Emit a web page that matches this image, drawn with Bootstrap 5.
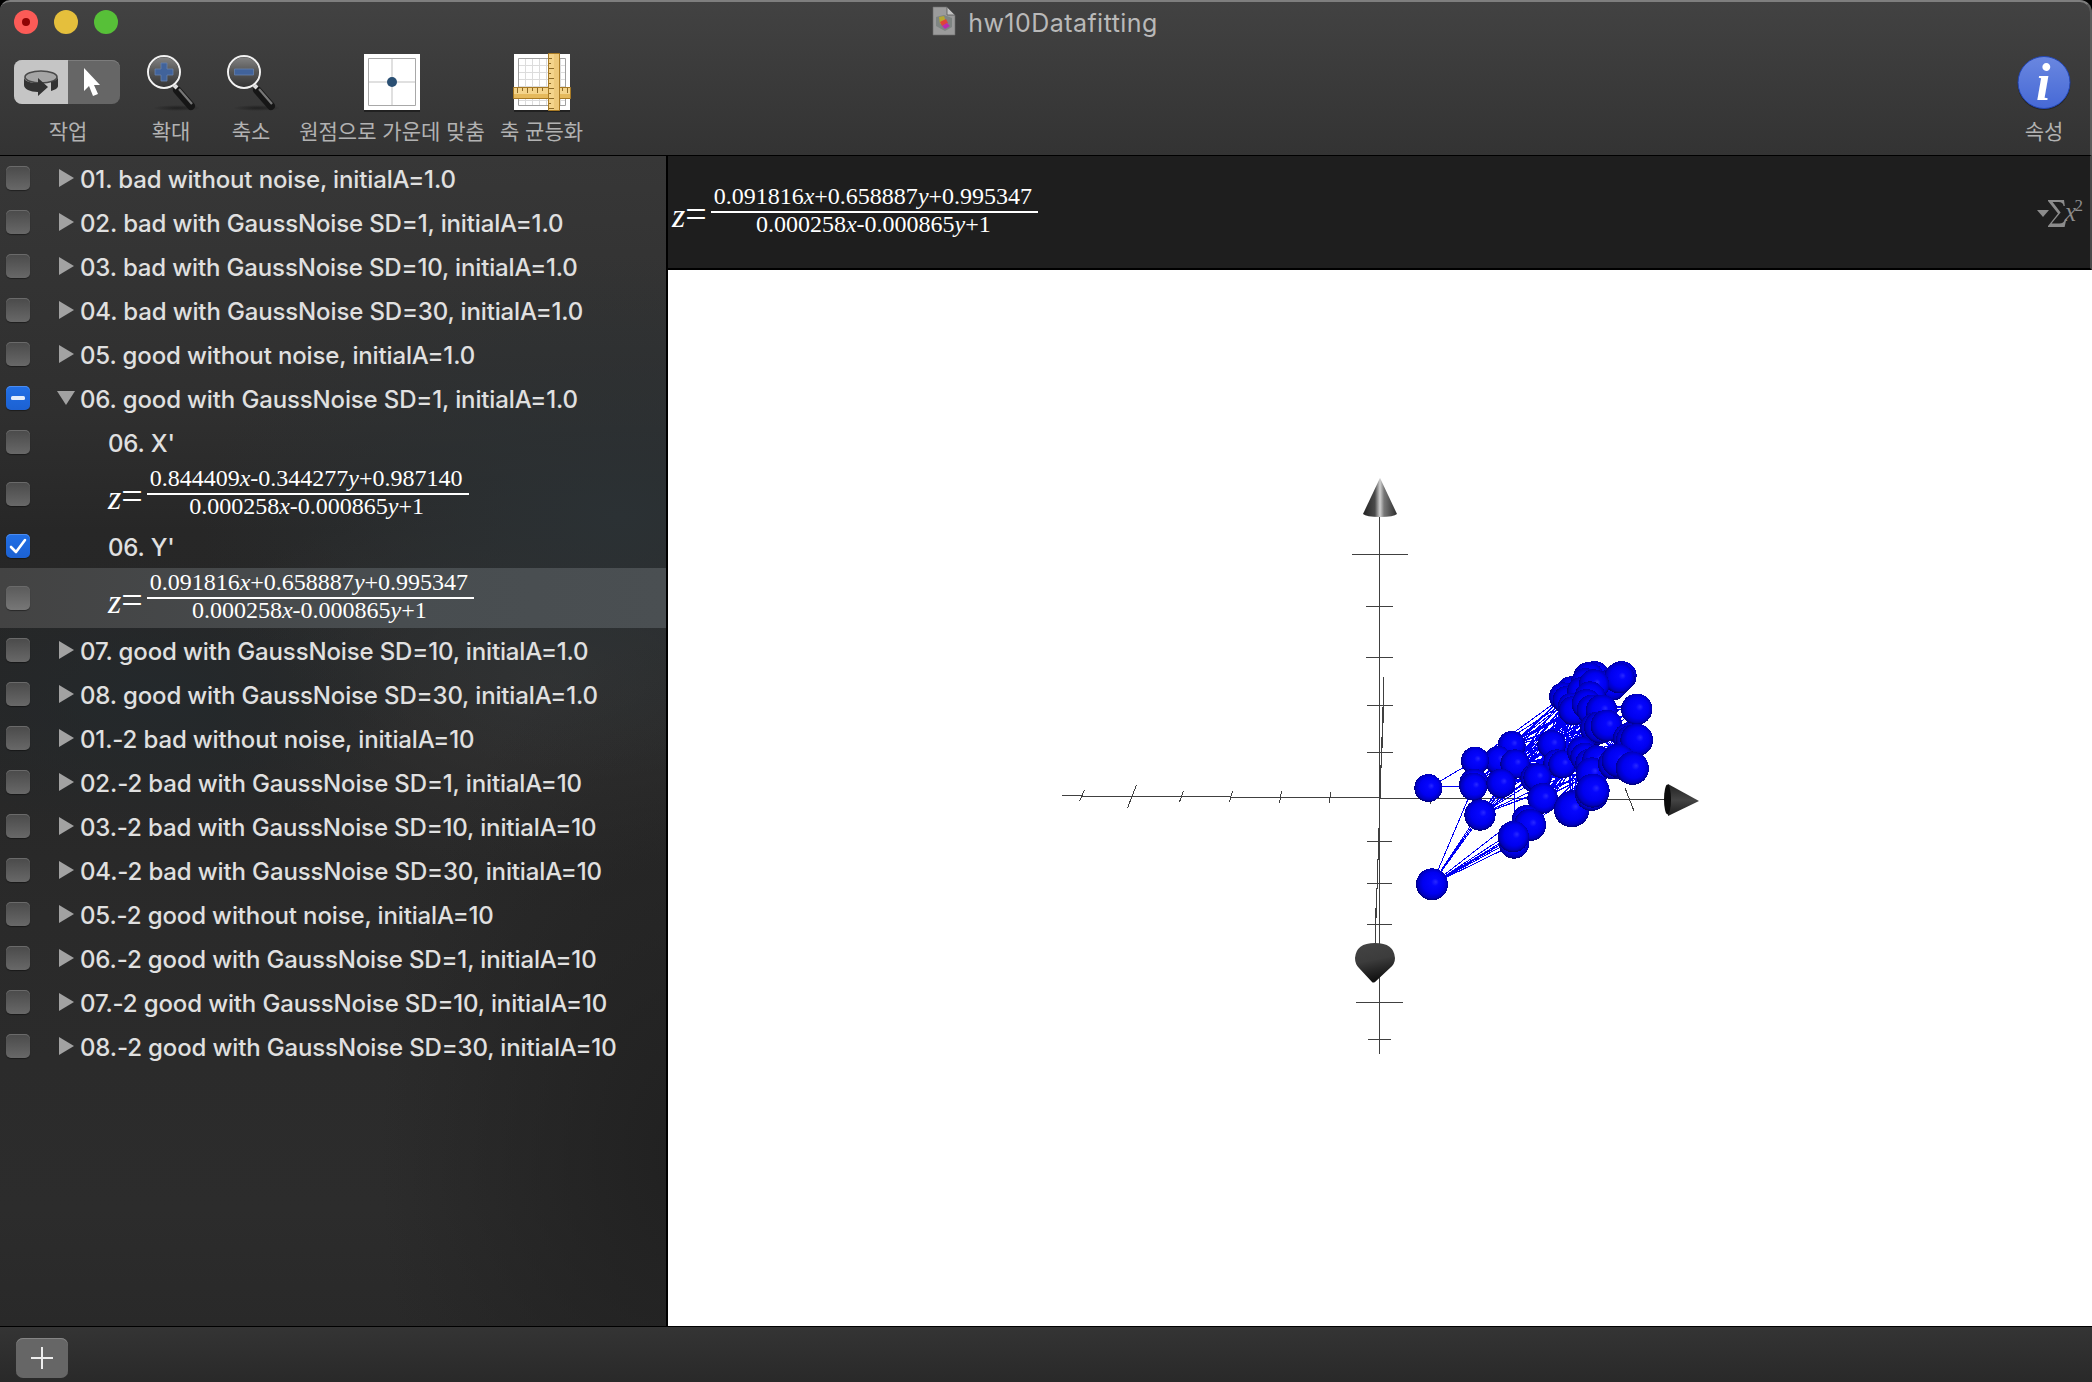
<!DOCTYPE html>
<html lang="ko" data-bs-theme="dark">
<head>
<meta charset="utf-8">
<title>hw10Datafitting</title>
<link href="https://cdn.jsdelivr.net/npm/bootstrap@5.3.0/dist/css/bootstrap.min.css" rel="stylesheet">
<style>
body{background:#000;font-family:Inter,"Noto Sans CJK KR",sans-serif;overflow:hidden}
.app-win{width:2092px;height:1382px}
.top-bar{height:156px;border-top:2px solid #7e7e7e;border-right:2px solid #5c5c5c;border-bottom:1px solid #000;border-radius:10px 12px 0 0;background:linear-gradient(#424242,#333)}
.title-row{height:42px;color:#b9b9b9;font-size:25px;letter-spacing:.45px;line-height:42px}
.dots{left:14px;top:8px;gap:16px}
.dot{width:24px;height:24px;border-radius:50%}
.tool-row{height:111px;padding:7px 6px 0 14px}
.tool{width:80px;height:103px;color:#b2b2b2;font:21px/30px "Noto Sans CJK KR",sans-serif}
.tool .pic{height:64px}
.seg{width:106px;height:44px;margin-top:9px;margin-right:2px;border-radius:8px;overflow:hidden;background:#666;box-shadow:inset 0 1px #7c7c7c}
.seg>span:first-child{width:54px;background:#c5c5c5}
.side{width:668px;border-right:2px solid #000;background:radial-gradient(420px 260px at 620px 360px,#2b3134 0,#2b313400 100%),radial-gradient(260px 140px at 160px 540px,#24292c 0,#24292c00 100%),radial-gradient(300px 520px at 680px 1000px,#212121 0,#21212100 100%),radial-gradient(360px 200px at 560px 520px,#333 0,#3330 100%),linear-gradient(#373737 0,#2f2f2f 22%,#272727 32%,#262626 45%,#2a2a2a 65%,#2c2c2c 90%,#292929 100%)}
.item{height:44px;padding-left:6px;color:#e0e0e0;font-size:24px;font-weight:450;letter-spacing:-.14px;line-height:44px;white-space:nowrap}
.item.eqn{height:60px;font-weight:400}
.item.sel{background:linear-gradient(90deg,#434343,#484d50 60%,#4a4f52)}
.chk{width:24px;height:24px;border-radius:5px;flex:none;background:linear-gradient(#4a4a4a,#686868);box-shadow:0 1px 1px #0006,inset 0 1px #6a6a6a}
.chk.on{background:linear-gradient(#2270e6,#1c61d2);box-shadow:0 1px 1px #0006,inset 0 1px #4b8cf0}
.sel .chk{background:linear-gradient(#5a5a5a,#777)}
.chk svg,.tri{display:block}
.tri{flex:none;margin:0 4px 0 28px}
.lbl{padding-top:4px}
.kid{margin-left:78px}
.eq{font-family:"Liberation Serif",serif;color:#fff;letter-spacing:0}
.eq .lhs{font-size:34px;line-height:34px;padding-top:7px;margin-right:4px}
.eq b{font-size:38px;font-weight:400;line-height:1px}
.fr{font-size:24px;text-align:center;margin-top:-2px}
.fr .nu{line-height:26px;padding:0 6px 2px 3px;border-bottom:2px solid #fff}
.fr .de{line-height:22px;padding:0 2px 6px 0}
.fr .de{margin-bottom:-2px}
.fbar{height:114px;background:#1e1e1e;border-bottom:2px solid #000;border-right:2px solid #4a4a4a;padding:0 7px 0 4px}
.foot{height:56px;border-top:1px solid #000;background:linear-gradient(#343434,#292929);padding:11px 0 0 16px}
.plus{width:52px;height:40px;padding:0;border:0;border-radius:7px;background:#666;box-shadow:inset 0 1px #858585}
</style>
</head>
<body>
<div class="app-win d-flex flex-column">
<header class="top-bar flex-shrink-0 position-relative">
 <div class="dots position-absolute d-flex">
  <span class="dot d-flex align-items-center justify-content-center" style="background:#fc5b57"><svg width="8" height="8"><circle cx="4" cy="4" r="4" fill="#8f0404"/></svg></span>
  <span class="dot" style="background:#e5bf3c"></span><span class="dot" style="background:#57c038"></span>
 </div>
 <div class="title-row d-flex justify-content-center">
  <svg width="24" height="30" viewBox="0 0 24 30" class="me-2" style="margin-top:4px"><path d="M1 1h14l8 8v20H1z" fill="#9b9b9b" stroke="#6b6b6b" stroke-width=".6"/><path d="M15 1v8h8z" fill="#c2c2c2" stroke="#555" stroke-width=".8"/><path d="M4 11l8-2 8 3v9l-7 4-9-5z" fill="#7e8482"/><path d="M7 11l5-1 2 6-6 2z" fill="#b5a72f"/><path d="M8 16l6-3 2 4-6 3z" fill="#e0423a"/><path d="M10 20l5-3 3 3-5 3z" fill="#b92cae"/></svg>
  <span class="ms-1">hw10Datafitting</span>
 </div>
 <div class="tool-row d-flex">
  <div class="tool d-flex flex-column align-items-center" style="width:108px"><div class="pic">
   <div class="seg d-flex"><span><svg width="54" height="44" viewBox="0 0 54 44"><ellipse cx="27" cy="17" rx="16" ry="6" fill="#a5a5a5" stroke="#4a4a4a" stroke-width="1.6"/><path d="M10 17v8c0 4 6 7 14 7v4l10-9-10-9v5c-8 0-14-2-14-6zM44 17v9c0 2-3 4-7 5v-9c4-1 7-3 7-5z" fill="#333"/></svg></span><span><svg width="52" height="44" viewBox="0 0 52 44"><path d="M16 8v23l5-5 4 10 5-2-4-9h6z" fill="#fff"/></svg></span></div></div>작업</div>
  <div class="tool d-flex flex-column align-items-center" style="margin-left:9px"><div class="pic"><svg width="56" height="62" viewBox="144 50 56 62">
   <defs><linearGradient id="lens" x2="0" y2="1"><stop stop-color="#858585"/><stop offset=".5" stop-color="#555"/><stop offset="1" stop-color="#333"/></linearGradient><radialGradient id="sh"><stop stop-color="#111" stop-opacity=".6"/><stop offset="1" stop-color="#111" stop-opacity="0"/></radialGradient>
   <g id="glass"><ellipse cx="178" cy="107" rx="24" ry="3" fill="url(#sh)"/><path d="M178 89l14 16" stroke="#161616" stroke-width="8" stroke-linecap="round"/><path d="M180 88l13 15" stroke="#777" stroke-width="2.2"/><path d="M174 83l4 4" stroke="#ddd" stroke-width="4"/><circle cx="165" cy="71" r="15.8" fill="url(#lens)" stroke="#222" stroke-width="2"/><circle cx="165" cy="71" r="16" fill="none" stroke="#f2f2f2" stroke-width="2"/></g></defs>
   <use href="#glass"/><path d="M162 62h6v6h6v6h-6v6h-6v-6h-6v-6h6z" fill="#41639b" stroke="#6480ad" stroke-width=".8"/></svg></div>확대</div>
  <div class="tool d-flex flex-column align-items-center"><div class="pic"><svg width="56" height="62" viewBox="144 50 56 62"><use href="#glass"/><path d="M155.500 68h19v6h-19z" fill="#41639b" stroke="#6480ad" stroke-width=".8"/></svg></div>축소</div>
  <div class="tool d-flex flex-column align-items-center" style="width:202px"><div class="pic"><svg width="62" height="62" viewBox="0 0 62 62"><path d="M3 4h56v57H3z" fill="#0006"/><path d="M3 3h56v56H3z" fill="#fff"/><path d="M31 8v46M8 31h46" stroke="#e0e0e0" stroke-width="2"/><path d="M7.500 7.500h47v47h-47z" fill="none" stroke="#a8a8a8"/><circle cx="31" cy="31" r="5" fill="#2a4f73"/></svg></div>원점으로 가운데 맞춤</div>
  <div class="tool d-flex flex-column align-items-center" style="width:97px"><div class="pic"><svg width="62" height="62" viewBox="0 0 62 62"><path d="M3 4h56v57H3z" fill="#0006"/><path d="M3 3h56v56H3z" fill="#fff"/><path d="M14.500 8v46M21.500 8v46M28.500 8v46M35.500 8v46M42.500 8v46M49.500 8v46M8 14.500h46M8 21.500h46M8 28.500h46M8 35.500h46M8 42.500h46M8 49.500h46" stroke="#dcdcdc"/><path d="M7.500 7.500h47v47h-47z" fill="none" stroke="#a0a0a0"/>
   <path d="M2.500 36.500h57v11h-57z" fill="#f4d48b" stroke="#a87a24"/><path d="M3 43h56v4H3z" fill="#e5b95c"/><path d="M6.500 37v5M11.500 37v3M16.500 37v5M21.500 37v3M26.500 37v5M31.500 37v3M51.500 37v3M56.500 37v5" stroke="#8d6a27"/>
   <path d="M37.500 2.500h11v57h-11z" fill="#f4d48b" stroke="#a87a24"/><path d="M43 3h5v56h-5z" fill="#edc97b"/><path d="M38 7.500h3M38 12.500h2M38 17.500h5M38 22.500h2M38 27.500h5M38 32.500h2M38 37.500h5M38 42.500h2M38 47.500h5M38 52.500h2M38 57.500h5" stroke="#8d6a27"/></svg></div>축 균등화</div>
  <div class="tool d-flex flex-column align-items-center ms-auto"><div class="pic"><svg width="58" height="62" viewBox="0 0 58 62"><defs><linearGradient id="inf" x2="0" y2="1"><stop stop-color="#6a87e0"/><stop offset="1" stop-color="#4669d6"/></linearGradient></defs><circle cx="29" cy="32.500" r="26.500" fill="#0005"/><circle cx="29" cy="31.500" r="26" fill="url(#inf)" stroke="#2246b5"/><text x="21" y="49" font-family="Liberation Serif" font-style="italic" font-weight="700" font-size="52" fill="#fff">i</text></svg></div>속성</div>
 </div>
</header>
<div class="d-flex flex-grow-1">
 <aside class="side flex-shrink-0">
  <svg width="0" height="0" class="d-block"><defs><path id="shut" d="M1 0l15 9L1 18z" fill="#a2a2a2"/><path id="open" d="M-1 2h18L8 16z" fill="#a2a2a2"/></defs></svg>
  <div class="item d-flex align-items-center"><span class="chk"></span><svg class="tri" width="18" height="18"><use href="#shut"/></svg><span class="lbl">01. bad without noise, initialA=1.0</span></div>
  <div class="item d-flex align-items-center"><span class="chk"></span><svg class="tri" width="18" height="18"><use href="#shut"/></svg><span class="lbl">02. bad with GaussNoise SD=1, initialA=1.0</span></div>
  <div class="item d-flex align-items-center"><span class="chk"></span><svg class="tri" width="18" height="18"><use href="#shut"/></svg><span class="lbl">03. bad with GaussNoise SD=10, initialA=1.0</span></div>
  <div class="item d-flex align-items-center"><span class="chk"></span><svg class="tri" width="18" height="18"><use href="#shut"/></svg><span class="lbl">04. bad with GaussNoise SD=30, initialA=1.0</span></div>
  <div class="item d-flex align-items-center"><span class="chk"></span><svg class="tri" width="18" height="18"><use href="#shut"/></svg><span class="lbl">05. good without noise, initialA=1.0</span></div>
  <div class="item d-flex align-items-center"><span class="chk on"><svg width="24" height="24"><rect x="5" y="10" width="14" height="4" rx="1.500" fill="#e4edfb"/></svg></span><svg class="tri overflow-visible" width="18" height="18"><use href="#open"/></svg><span class="lbl">06. good with GaussNoise SD=1, initialA=1.0</span></div>
  <div class="item d-flex align-items-center"><span class="chk"></span><span class="lbl kid">06. X'</span></div>
  <div class="item eqn d-flex align-items-center"><span class="chk"></span><div class="eq kid d-flex align-items-center"><span class="lhs"><i>z</i><b>=</b></span><div class="fr"><div class="nu">0.844409<i>x</i>-0.344277<i>y</i>+0.987140</div><div class="de">0.000258<i>x</i>-0.000865<i>y</i>+1</div></div></div></div>
  <div class="item d-flex align-items-center"><span class="chk on"><svg width="24" height="24"><path d="M5 13l5 5 9-12" fill="none" stroke="#fff" stroke-width="2.600" stroke-linecap="round" stroke-linejoin="round"/></svg></span><span class="lbl kid">06. Y'</span></div>
  <div class="item eqn sel d-flex align-items-center"><span class="chk"></span><div class="eq kid d-flex align-items-center"><span class="lhs"><i>z</i><b>=</b></span><div class="fr"><div class="nu">0.091816<i>x</i>+0.658887<i>y</i>+0.995347</div><div class="de">0.000258<i>x</i>-0.000865<i>y</i>+1</div></div></div></div>
  <div class="item d-flex align-items-center"><span class="chk"></span><svg class="tri" width="18" height="18"><use href="#shut"/></svg><span class="lbl">07. good with GaussNoise SD=10, initialA=1.0</span></div>
  <div class="item d-flex align-items-center"><span class="chk"></span><svg class="tri" width="18" height="18"><use href="#shut"/></svg><span class="lbl">08. good with GaussNoise SD=30, initialA=1.0</span></div>
  <div class="item d-flex align-items-center"><span class="chk"></span><svg class="tri" width="18" height="18"><use href="#shut"/></svg><span class="lbl">01.-2 bad without noise, initialA=10</span></div>
  <div class="item d-flex align-items-center"><span class="chk"></span><svg class="tri" width="18" height="18"><use href="#shut"/></svg><span class="lbl">02.-2 bad with GaussNoise SD=1, initialA=10</span></div>
  <div class="item d-flex align-items-center"><span class="chk"></span><svg class="tri" width="18" height="18"><use href="#shut"/></svg><span class="lbl">03.-2 bad with GaussNoise SD=10, initialA=10</span></div>
  <div class="item d-flex align-items-center"><span class="chk"></span><svg class="tri" width="18" height="18"><use href="#shut"/></svg><span class="lbl">04.-2 bad with GaussNoise SD=30, initialA=10</span></div>
  <div class="item d-flex align-items-center"><span class="chk"></span><svg class="tri" width="18" height="18"><use href="#shut"/></svg><span class="lbl">05.-2 good without noise, initialA=10</span></div>
  <div class="item d-flex align-items-center"><span class="chk"></span><svg class="tri" width="18" height="18"><use href="#shut"/></svg><span class="lbl">06.-2 good with GaussNoise SD=1, initialA=10</span></div>
  <div class="item d-flex align-items-center"><span class="chk"></span><svg class="tri" width="18" height="18"><use href="#shut"/></svg><span class="lbl">07.-2 good with GaussNoise SD=10, initialA=10</span></div>
  <div class="item d-flex align-items-center"><span class="chk"></span><svg class="tri" width="18" height="18"><use href="#shut"/></svg><span class="lbl">08.-2 good with GaussNoise SD=30, initialA=10</span></div>
 </aside>
 <main class="flex-grow-1 d-flex flex-column">
  <div class="fbar d-flex align-items-center flex-shrink-0">
   <div class="eq d-flex align-items-center"><span class="lhs"><i>z</i><b>=</b></span><div class="fr"><div class="nu">0.091816<i>x</i>+0.658887<i>y</i>+0.995347</div><div class="de">0.000258<i>x</i>-0.000865<i>y</i>+1</div></div></div>
   <svg class="ms-auto" width="48" height="40" viewBox="2035 192 48 40" fill="#8c8c8c" font-family="Liberation Serif"><path d="M2037 210h12l-6 7z"/><path d="M2048 200h16l.8 6h-1.200c-.6-3-2-4-5-4h-6l8 10.500-9 11h7.500c3.500 0 5-1.500 6-4.500h1.300l-1.800 8h-16.600v-1l10-12.500-10-12.500z"/><text x="2065" y="221" font-style="italic" font-size="27" textLength="11" lengthAdjust="spacingAndGlyphs">x</text><text x="2074.500" y="211" font-size="17">2</text></svg>
  </div>
  <svg id="plot" class="d-block bg-white" width="1424" height="1056" viewBox="668 270 1424 1056">
   <defs>
    <radialGradient id="ball" cx=".5" cy=".48" r=".54" fx=".62" fy=".42"><stop stop-color="#2828ff"/><stop offset=".22" stop-color="#0505fe"/><stop offset=".62" stop-color="#0000f0"/><stop offset=".84" stop-color="#0000c0"/><stop offset="1" stop-color="#000064"/></radialGradient>
    <linearGradient id="cup"><stop stop-color="#222"/><stop offset=".35" stop-color="#4a4a4a"/><stop offset=".5" stop-color="#d0d0d0"/><stop offset=".62" stop-color="#777"/><stop offset="1" stop-color="#2c2c2c"/></linearGradient>
    <linearGradient id="cdn" x2=".2" y2="1"><stop stop-color="#444"/><stop offset=".5" stop-color="#3c3c3c"/><stop offset="1" stop-color="#111"/></linearGradient>
    <linearGradient id="crt" x2="0" y2="1"><stop stop-color="#222"/><stop offset=".5" stop-color="#444"/><stop offset="1" stop-color="#1c1c1c"/></linearGradient>
   </defs>
   <g stroke="#404040" fill="none" shape-rendering="crispEdges">
    <path d="M1379.500 515V1054M1352 554.500h56M1366 606.500h27M1366 657.500h27M1367 705.500h26M1367 752.500h26M1367 841.500h25M1367 883.500h25M1367 924.500h25M1356 1002.500h47M1368 1039.500h23"/>
    <path d="M1062 795.500h20M1081 796.500h150M1231 797.500h150M1380 798.500h200M1580 799.500h90"/>
    <path d="M1383.500 677v46M1382.500 707v41M1381.500 737v31M1380.500 765v33M1378.500 828v32M1377.500 859v30M1376.500 888v30M1375.500 908v36"/>
    <path d="M1084.500 790l-5 11M1136.500 785l-9 23M1183.500 791l-4 11M1232.500 791l-3 11M1281.500 791l-2 12M1330.500 792l-1 11M1428 799l3 5M1625 788l9 23"/>
   </g>
   <path d="M1380 478l17 36q-3 3-17 3t-17-3z" fill="url(#cup)"/>
   <path d="M1355 958q1-15 20-15t20 15q0 6-5 10l-15 14q-2 1-3 0l-13-14q-4-4-4-10z" fill="url(#cdn)"/>
   <path d="M1668 784l31 17-31 15z" fill="url(#crt)"/><ellipse cx="1667.500" cy="799.500" rx="3.500" ry="15" fill="#0c0c0c"/>
   <g id="links" stroke="#0000f4" fill="none" shape-rendering="crispEdges"/><g id="balls" fill="url(#ball)" shape-rendering="crispEdges"/>
  </svg>
 </main>
</div>
<footer class="foot flex-shrink-0"><button class="plus btn d-flex align-items-center justify-content-center"><svg width="22" height="22"><path d="M11 0v22M0 11h22" stroke="#eee" stroke-width="2"/></svg></button></footer>
</div>
<script src="https://cdn.jsdelivr.net/npm/bootstrap@5.3.0/dist/js/bootstrap.bundle.min.js"></script>
<script>
// Fitted samples: x, y, radius in thirds of a pixel from (1400, 640), far to near.
const pts = [[583,108,45],[566,112,46],[512,152,43],[490,170,43],[500,180,42],[556,128,44],[665,108,45],[640,130,44],[635,134,48],[658,114,46],[545,155,44],[515,200,42],[520,212,44],[582,134,46],[570,170,46],[560,192,45],[576,210,46],[605,212,48],[710,208,47],[590,265,50],[600,262,48],[620,257,48],[685,295,46],[695,302,48],[710,300,49],[455,313,43],[470,368,40],[487,373,42],[545,335,44],[555,352,44],[570,370,44],[592,362,46],[575,400,48],[640,372,46],[668,372,48],[655,362,50],[697,385,50],[335,315,42],[295,360,42],[225,362,42],[222,430,44],[220,440,42],[345,372,44],[303,430,44],[405,415,44],[412,412,42],[428,475,46],[520,500,50],[515,508,54],[575,463,50],[578,452,51],[85,444,42],[240,525,47],[380,540,45],[390,555,48],[342,610,46],[340,590,47],[96,733,48]];
const X = v => 1400 + v / 3, Y = v => 640 + v / 3;
const right = [[490,170],[500,185],[520,215],[560,190],[605,212],[620,255],[590,265],[655,365],[575,400],[545,335],[592,362]];
const left = [[225,362],[222,435],[303,430],[345,372],[335,315],[240,525],[405,415],[428,475],[455,313],[485,373],[390,555]];
let d = '';
const seg = (a, b) => d += `M${X(a[0])} ${Y(a[1])}L${X(b[0])} ${Y(b[1])}`;
left.forEach(a => right.forEach(b => seg(a, b)));
[[240,525],[230,530],[222,435],[250,520],[428,475],[340,592],[330,580],[340,600],[345,612],[350,585],[390,555]].forEach(b => seg([96,733], b));
seg([85,444],[225,362]); seg([85,440],[222,438]); seg([225,362],[335,315]); seg([342,372],[342,592]); seg([230,362],[236,525]);
right.forEach(a => [[710,208],[710,300],[697,385],[515,508]].forEach(b => seg(a, b)));
document.getElementById('links').innerHTML = `<path d="${d}"/>`;
document.getElementById('balls').innerHTML = pts.map(p => `<circle cx="${X(p[0])}" cy="${Y(p[1])}" r="${p[2] / 3}"/>`).join('');
</script>
</body>
</html>
